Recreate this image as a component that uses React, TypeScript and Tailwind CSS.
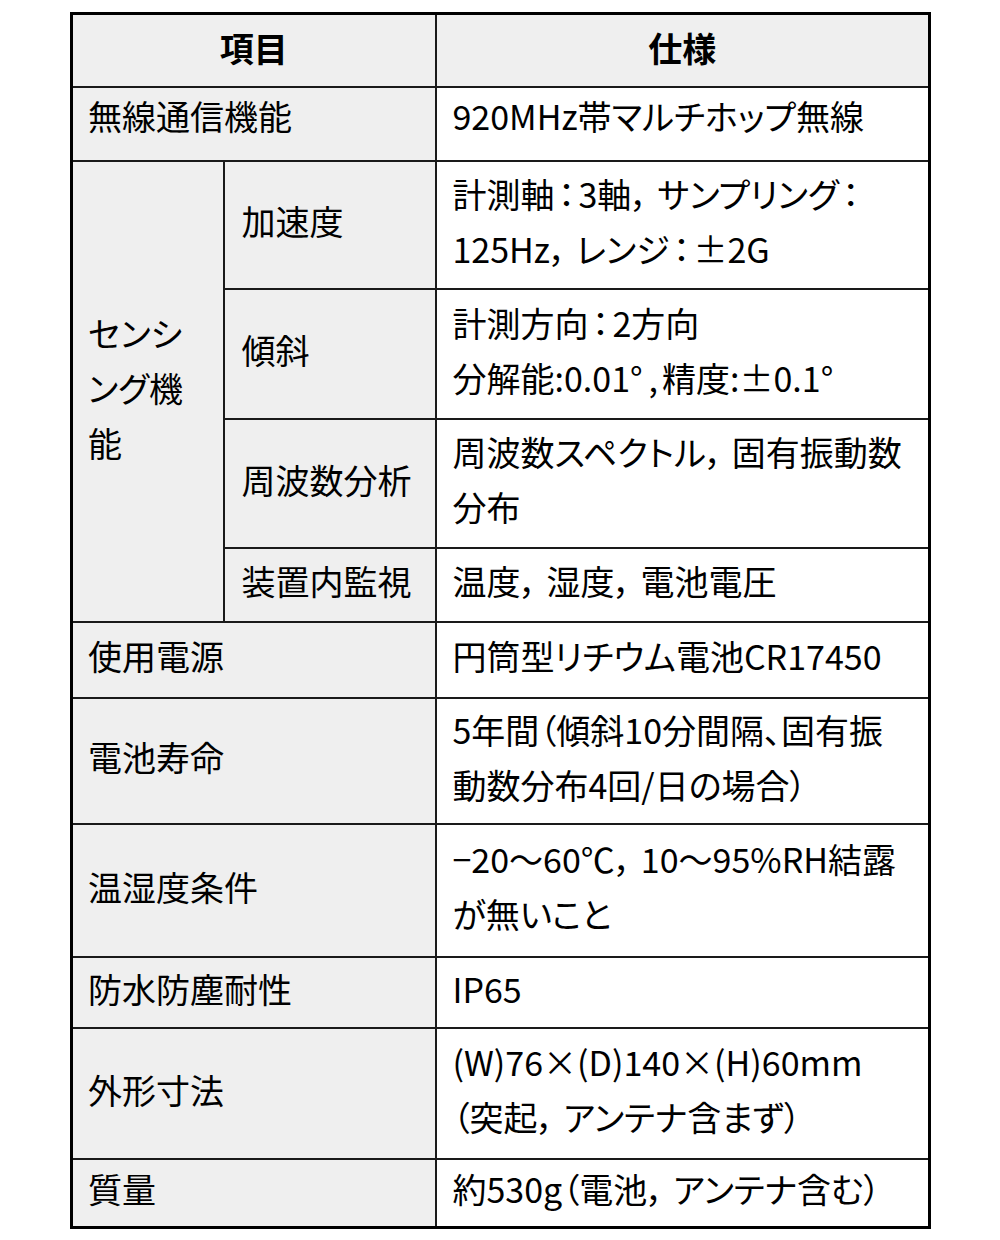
import React from "react";

const BASE = "border-2 border-[#1a1a1a] align-middle text-left whitespace-nowrap pb-[8px]";
const L = `${BASE} bg-[#efefef] pl-[15px] pr-2`;
const S = `${BASE} bg-[#efefef] pl-[17px] pr-2`;
const R = `${BASE} bg-white pl-[16px] pr-2`;

function Cm() {
  return <span className="inline-block w-[26px]">，</span>;
}
function Cl() {
  return <span className="inline-block w-[24px] text-center">：</span>;
}

export default function App() {
  return (
    <div className="w-[1000px] min-h-[1240px] bg-white pl-[70px] pt-[12px] text-black">
      <table className="w-[861px] table-fixed border-collapse border-[3px] border-black text-[34px] leading-[55px] font-['Noto_Sans_CJK_JP','Noto_Sans_CJK_SC',sans-serif] [font-feature-settings:'palt']">
        <colgroup>
          <col className="w-[152px]" />
          <col className="w-[212px]" />
          <col />
        </colgroup>
        <tbody>
          <tr className="h-[73px]">
            <td colSpan={2} className="border-2 border-[#1a1a1a] bg-[#efefef] pb-[6px] text-center font-bold">
              項目
            </td>
            <td className="border-2 border-[#1a1a1a] bg-[#efefef] pb-[6px] text-center font-bold">仕様</td>
          </tr>
          <tr className="h-[73px]">
            <td colSpan={2} className={`${L} !pb-[17px]`}>
              無線通信機能
            </td>
            <td className={`${R} !pb-[17px]`}>920MHz帯マルチホップ無線</td>
          </tr>
          <tr className="h-[128px]">
            <td rowSpan={4} className={L}>
              センシ
              <br />
              ング機
              <br />
              能
            </td>
            <td className={S}>加速度</td>
            <td className={R}>
              計測軸
              <Cl />
              3軸
              <Cm />
              サンプリング
              <Cl />
              <br />
              125Hz
              <Cm />
              レンジ
              <Cl />
              ±2G
            </td>
          </tr>
          <tr className="h-[130px]">
            <td className={S}>傾斜</td>
            <td className={R}>
              計測方向
              <Cl />
              2方向
              <br />
              分解能:0.01°<span className="ml-[6px]">,</span>
              <span className="ml-[4px]">精度:±0.1°</span>
            </td>
          </tr>
          <tr className="h-[129px]">
            <td className={S}>周波数分析</td>
            <td className={R}>
              周波数スペクトル
              <Cm />
              固有振動数
              <br />
              分布
            </td>
          </tr>
          <tr className="h-[74px]">
            <td className={S}>装置内監視</td>
            <td className={R}>
              温度
              <Cm />
              湿度
              <Cm />
              電池電圧
            </td>
          </tr>
          <tr className="h-[76px]">
            <td colSpan={2} className={L}>
              使用電源
            </td>
            <td className={R}>円筒型リチウム電池CR17450</td>
          </tr>
          <tr className="h-[126px]">
            <td colSpan={2} className={L}>
              電池寿命
            </td>
            <td className={R}>
              5年間（傾斜10分間隔、固有振
              <br />
              動数分布4回/日の場合）
            </td>
          </tr>
          <tr className="h-[133px]">
            <td colSpan={2} className={L}>
              温湿度条件
            </td>
            <td className={R}>
              −20～60℃
              <Cm />
              10～95%RH結露
              <br />
              が無いこと
            </td>
          </tr>
          <tr className="h-[71px]">
            <td colSpan={2} className={L}>
              防水防塵耐性
            </td>
            <td className={R}>IP65</td>
          </tr>
          <tr className="h-[131px]">
            <td colSpan={2} className={L}>
              外形寸法
            </td>
            <td className={R}>
              (W)76×(D)140×(H)60mm
              <br />
              （突起
              <Cm />
              アンテナ含まず）
            </td>
          </tr>
          <tr className="h-[69px]">
            <td colSpan={2} className={L}>
              質量
            </td>
            <td className={R}>
              約530g（電池
              <Cm />
              アンテナ含む）
            </td>
          </tr>
        </tbody>
      </table>
    </div>
  );
}
